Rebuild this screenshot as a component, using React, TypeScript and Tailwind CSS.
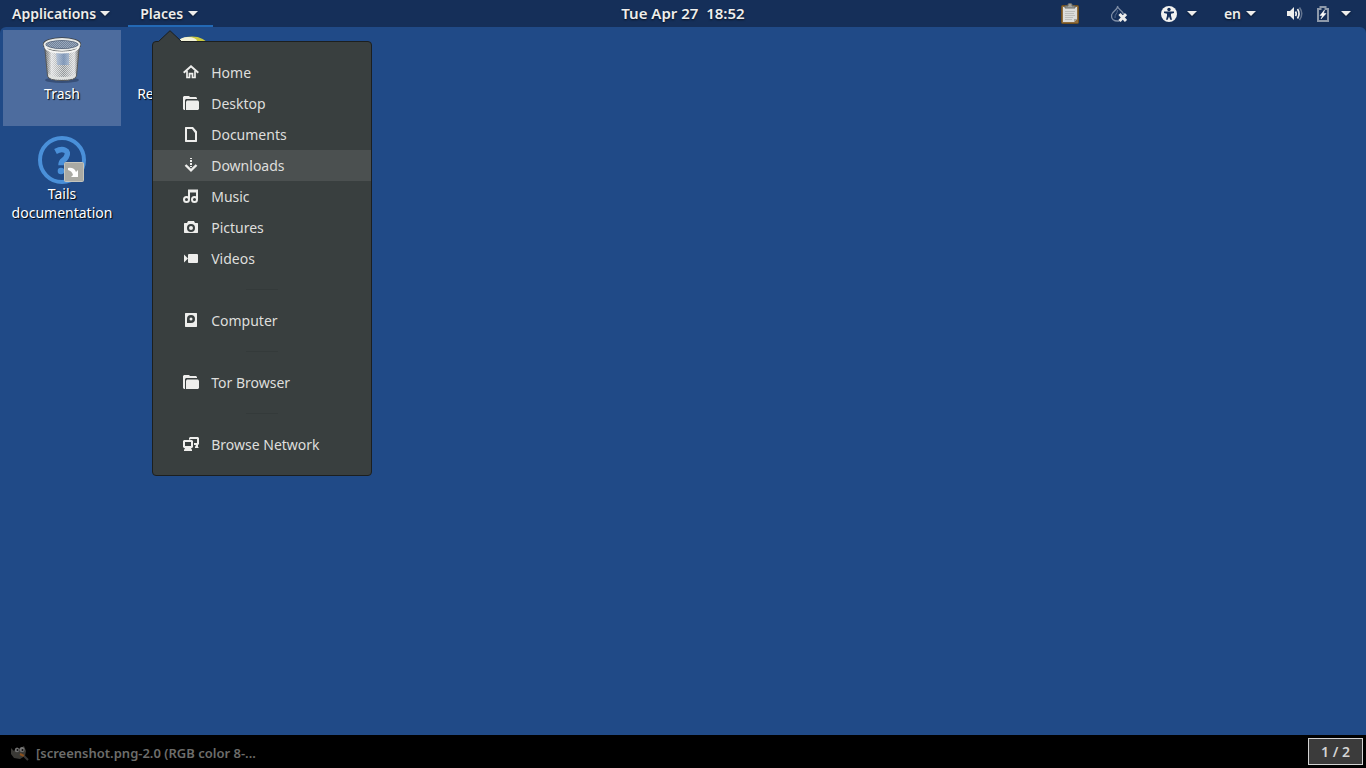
import React from "react";

const Caret = () => (
  <svg width="10" height="5" viewBox="0 0 10 5" aria-hidden="true" className="fill-[#eeeeec] drop-shadow-[0_1px_1px_#00000080]">
    <path d="M0 0h10L5 5z" />
  </svg>
);

// Symbolic 16px icons for the places menu
const paths = {
  home: (
    <>
      <path d="M.7 8.700 8 2.300 15.300 8.700" fill="none" stroke="currentColor" strokeWidth="2" />
      <path d="M4 7v6.500h2.500V9.700h3v3.800H12V7" fill="none" stroke="currentColor" strokeWidth="1.700" />
    </>
  ),
  folder: (
    <>
      <path d="M0 2 1 1h5l1 1h6l1 1v1H3L2 5v10H1l-1-1z" />
      <path d="M4 5.500h11l1 1V14l-1 1H3V6.500z" />
    </>
  ),
  document: <path fillRule="evenodd" d="M2.500 1H10l4 4.500v10l-.5.500h-11l-.5-.5v-14zM4 3v11h8V7L9 3z" />,
  download: (
    <>
      <path d="M7 1h2v1H7zM7 3h2v2H7zM7 6h2v2H7zM7 9h2v1H7z" />
      <path d="M2.500 8 8 13.300 13.500 8" fill="none" stroke="currentColor" strokeWidth="2.400" />
    </>
  ),
  music: (
    <>
      <path d="M5 1.500h10V11h-2V4.500H7V11H5z" />
      <circle cx="3.500" cy="11.500" r="2.500" fill="none" stroke="currentColor" strokeWidth="2" />
      <circle cx="11.500" cy="11.500" r="2.500" fill="none" stroke="currentColor" strokeWidth="2" />
    </>
  ),
  camera: (
    <path fillRule="evenodd" d="M5 2h6l1 2h2.500l.5.500v9l-.5.500h-13l-.5-.5v-9l.5-.5H4zM8 5a4 4 0 1 0 0 8 4 4 0 0 0 0-8m0 2a2 2 0 1 1 0 4 2 2 0 0 1 0-4" />
  ),
  video: (
    <>
      <rect x="5" y="4" width="10" height="9" rx="1" />
      <path d="M1 4.500v8l4-4z" />
    </>
  ),
  computer: (
    <path fillRule="evenodd" d="M2.500 1h11l.5.500v13l-.5.500h-11l-.5-.5v-13zM8 3a4 4 0 0 0-4 4v4h4a4 4 0 0 0 0-8m0 2.500a1.500 1.500 0 1 1 0 3 1.500 1.500 0 0 1 0-3" />
  ),
  network: (
    <>
      <path d="M7 1h8l1 1v6l-1 1v2l1 1h-4v-1l1-2h-2V7h3V3H8L6 4V2z" />
      <path fillRule="evenodd" d="M1 4h8l1 1v6l-1 1H8l1 2v1H1v-1l1-2H1l-1-1V5zm1 2v4h6V6z" />
    </>
  ),
};

type PlaceIcon = keyof typeof paths;

const groups: { label: string; icon: PlaceIcon }[][] = [
  [
    { label: "Home", icon: "home" },
    { label: "Desktop", icon: "folder" },
    { label: "Documents", icon: "document" },
    { label: "Downloads", icon: "download" },
    { label: "Music", icon: "music" },
    { label: "Pictures", icon: "camera" },
    { label: "Videos", icon: "video" },
  ],
  [{ label: "Computer", icon: "computer" }],
  [{ label: "Tor Browser", icon: "folder" }],
  [{ label: "Browse Network", icon: "network" }],
];

const PlacesMenu = () => (
  <div className="absolute top-[41px] left-6 z-20 w-[220px] rounded-sm border border-[#1c1f1f] bg-[#393f3f] py-[15px] text-[14px] font-normal text-[#dededc]">
    <svg width="26" height="12" viewBox="0 0 26 12" aria-hidden="true" className="absolute -top-3 left-1">
      <path d="M0 12 2 11 13 .7 24 11l2 1z" fill="#393f3f" />
      <path d="M0 11.500h1.500L13 .7l11.500 10.800H26" fill="none" stroke="#1c1f1f" />
    </svg>
    {groups.map((group, i) => (
      <React.Fragment key={i}>
        {i > 0 && (
          <div className="flex h-[31px] items-center justify-center">
            <hr className="w-8 border-[#343a3a]" />
          </div>
        )}
        {group.map((place) => (
          <button
            key={place.label}
            className={`flex h-[31px] w-full items-center gap-3 pl-[30px] ${place.label === "Downloads" ? "bg-[#4b5050]" : ""}`}
          >
            <svg width="16" height="16" viewBox="0 1 16 16" fill="currentColor" aria-hidden="true" className="text-[#eeeeec]">
              {paths[place.icon]}
            </svg>
            {place.label}
          </button>
        ))}
      </React.Fragment>
    ))}
  </div>
);

const TopBar = () => (
  <header className="relative z-10 grid h-[27px] shrink-0 grid-cols-[1fr_auto_1fr] items-center bg-[#152f59] text-[14px] font-semibold text-[#eeeeec]">
    <nav className="flex h-[27px] gap-[6px]">
      <button className="flex items-center gap-1 px-3 text-shadow-[0_1px_2px_#000000b0]">
        Applications
        <Caret />
      </button>
      <div className="relative">
        <button className="flex h-full items-center gap-[5px] pr-[15px] pl-3 text-shadow-[0_1px_2px_#000000b0] shadow-[inset_0_-2px_#2369b5]">
          Places
          <Caret />
        </button>
        <PlacesMenu />
      </div>
    </nav>
    <button className="text-[15px] whitespace-pre text-shadow-[0_1px_2px_#000000b0]">{"Tue Apr 27  18:52"}</button>
    <div className="flex h-full items-center justify-end pr-[15px]">
      <button aria-label="Clipboard" className="mr-[31px]">
        <svg width="20" height="22" viewBox="0 0 20 22" aria-hidden="true">
          <rect x="1.500" y="2.500" width="17" height="18" rx="1" fill="#8f6d3e" stroke="#70501f" />
          <path d="M3 4h14v12l-3 3H3z" fill="#dcdddb" />
          <path d="M14 19v-3h3z" fill="#a4a6a2" />
          <path d="M5 8.500h10M5 10.500h9M5 12.500h10M5 14.500h8M5 16.500h7" stroke="#bcbebb" />
          <path d="M5 5V3h3V1.500Q8 .5 10 .5t2 1V3h3v2z" fill="#a0a29e" stroke="#696b68" />
        </svg>
      </button>
      <button aria-label="Tor status" className="mr-[34px]">
        <svg width="16" height="18" viewBox="0 0 16 18" aria-hidden="true">
          <path d="M6.500 1c1 4-6 5-6 10 0 3 2.500 5 6 5h2M6.500 1c0 3 4.500 4 6 8" fill="none" stroke="#7f8ea6" strokeWidth="1.300" />
          <path d="M6.500 5c0 4-3 4-2.500 8" fill="none" stroke="#52688b" />
          <path d="m8.500 9 6.500 7m0-7-6.500 7" stroke="#eeeeec" strokeWidth="3" />
        </svg>
      </button>
      <button aria-label="Accessibility" className="mr-[27px] flex items-center gap-[10px]">
        <svg width="16" height="16" viewBox="0 0 16 16" aria-hidden="true">
          <circle cx="8" cy="8" r="8" fill="#f2f2f0" />
          <circle cx="8" cy="3.500" r="1.700" fill="#152f59" />
          <path d="M3 5.500h10V7l-3 .7v2l1 4H9.300L8 10.500l-1.300 3.200H5l1-4v-2L3 7z" fill="#152f59" />
        </svg>
        <Caret />
      </button>
      <button className="mr-[31px] flex items-center gap-[5px] text-shadow-[0_1px_2px_#000000b0]">
        en
        <Caret />
      </button>
      <button aria-label="System" className="flex items-center">
        <svg width="16" height="16" viewBox="0 0 16 16" aria-hidden="true" className="mr-[14px]">
          <path d="M0 5h3l4-4v13l-4-4H0z" fill="#eeeeec" />
          <path d="M8.500 5.500Q10 8 8.500 10M10.500 3Q13.500 7.500 10.500 12.500" fill="none" stroke="#eeeeec" strokeWidth="1.700" />
          <path d="M12.500 1.500Q17 7.500 12.500 14" fill="none" stroke="#63748f" strokeWidth="1.500" />
        </svg>
        <svg width="12" height="16" viewBox="0 0 12 16" aria-hidden="true" className="mr-3">
          <path d="M1 3h2.500V1h5v2H11v12H1z" fill="none" stroke="#8d99aa" strokeWidth="2" />
          <path d="M7.500 4 3 9.500h2.500L4 13l5-5.500H6.500z" fill="#fff" stroke="#fff" strokeWidth=".5" />
        </svg>
        <Caret />
      </button>
    </div>
  </header>
);

const TrashIcon = () => (
  <svg width="48" height="48" viewBox="0 -1 48 48" aria-hidden="true">
    <defs>
      <pattern id="mesh" width="2" height="2" patternUnits="userSpaceOnUse">
        <rect width="2" height="2" fill="#c6cacb" />
        <path d="M0 0h1v1H0zM1 1h1v1H1z" fill="#7b8083" />
      </pattern>
      <linearGradient id="shine">
        <stop offset="0" stopColor="#555" stopOpacity=".5" />
        <stop offset=".2" stopColor="#fff" stopOpacity=".7" />
        <stop offset=".55" stopColor="#fff" stopOpacity=".15" />
        <stop offset=".85" stopColor="#fff" stopOpacity=".65" />
        <stop offset="1" stopColor="#444" stopOpacity=".6" />
      </linearGradient>
    </defs>
    <ellipse cx="24" cy="43" rx="17" ry="3" fill="#1d2d49" opacity=".45" />
    <path d="M6.500 8 9.500 39q1 4.500 14.500 4.500t14.500-4.500l3-31z" fill="url(#mesh)" />
    <path d="M18 15h13v13H19z" fill="#5f7fae" opacity=".8" />
    <path d="M6.500 8 9.500 39q1 4.500 14.500 4.500t14.500-4.500l3-31z" fill="url(#shine)" stroke="#55585a" />
    <path d="M10 36q2 4 14 4t14-4l-.5 3.500q-2 3-13.500 3t-13.500-3z" fill="#e0e2e0" />
    <ellipse cx="24" cy="7.500" rx="17.500" ry="5.500" fill="url(#mesh)" stroke="#3e4143" strokeWidth="3.400" />
    <ellipse cx="24" cy="7.500" rx="17.500" ry="5.500" fill="#6a86b0" fillOpacity=".5" stroke="#e7e9e7" strokeWidth="2" />
    <path d="M7 9.500q2 6 17 6t17-6" fill="none" stroke="#f5f5f3" strokeWidth="2" />
  </svg>
);

const ReportIcon = () => (
  <svg width="48" height="48" viewBox="0 0 48 48" aria-hidden="true">
    <ellipse cx="28" cy="9" rx="15" ry="8.500" fill="#c9c83f" />
    <ellipse cx="24" cy="5" rx="9" ry="4" fill="#f2f2d8" />
  </svg>
);

const HelpIcon = () => (
  <svg width="48" height="48" viewBox="0 0 48 48" aria-hidden="true">
    <circle cx="24" cy="24" r="22" fill="none" stroke="#4a90d9" strokeWidth="4" />
    <path d="M17.500 15.500q5.500-3 9.500-1.300t1.300 6.800q-1 2-3 3.200-2.300 1.500-2.300 5" fill="none" stroke="#4a90d9" strokeWidth="5.500" />
    <circle cx="23" cy="35" r="3.300" fill="#4a90d9" />
    <rect x="26.500" y="26.500" width="19" height="19" rx="1" fill="#aaaaa4" stroke="#c5c5bd" />
    <path d="M30 32q6-1 8 4l2-2v7h-7l2-2q-1-4-5-5z" fill="#fff" />
  </svg>
);

const DesktopItem = ({ icon, label, selected = false }: { icon: React.ReactNode; label: string; selected?: boolean }) => (
  <button
    className={`flex h-24 w-[118px] flex-col items-center px-1 pt-1.5 text-[14px] leading-[19px] text-white text-shadow-[1px_1px_1px_#000000] ${selected ? "bg-[#4d6c9e]" : ""}`}
  >
    {icon}
    <span>{label}</span>
  </button>
);

const GimpIcon = () => (
  <svg width="20" height="18" viewBox="0 0 20 18" aria-hidden="true">
    <path d="M1 3 4 6l3-4 2 2 5-3 2 5-1 5-5 3-6-1-3-4z" fill="#3b3a36" />
    <circle cx="7" cy="5" r="2.200" fill="#747474" />
    <circle cx="12" cy="4.500" r="2.500" fill="#747474" />
    <circle cx="7.500" cy="5" r="1" fill="#111" />
    <circle cx="12.500" cy="5" r="1" fill="#111" />
    <path d="m10 9 4 2" stroke="#89501f" strokeWidth="2" />
    <path d="m14 11 4 4" stroke="#373737" strokeWidth="2" />
  </svg>
);

const App = () => (
  <div className="flex min-h-screen flex-col bg-[#152f59] font-['Noto_Sans',sans-serif]">
    <TopBar />
    <main className="flex flex-1 items-start gap-2 rounded-t-md bg-[#204a87] pt-[3px] pl-[3px]">
      <div className="flex flex-col gap-1">
        <DesktopItem icon={<TrashIcon />} label="Trash" selected />
        <DesktopItem icon={<HelpIcon />} label="Tails documentation" />
      </div>
      <DesktopItem icon={<ReportIcon />} label="Report an error" />
    </main>
    <footer className="flex h-[33px] shrink-0 items-center justify-between bg-black pr-[3px] pl-[10px]">
      <button className="flex items-center gap-[6px] pt-1 text-[13px] font-semibold text-[#6d6d6b]">
        <GimpIcon />
        [screenshot.png-2.0 (RGB color 8-...
      </button>
      <button className="h-[27px] w-[55px] border border-[#d3d3d3] bg-[#3b3b3b] text-[14px] font-semibold text-[#d3d3d3]">
        1 / 2
      </button>
    </footer>
  </div>
);

export default App;
